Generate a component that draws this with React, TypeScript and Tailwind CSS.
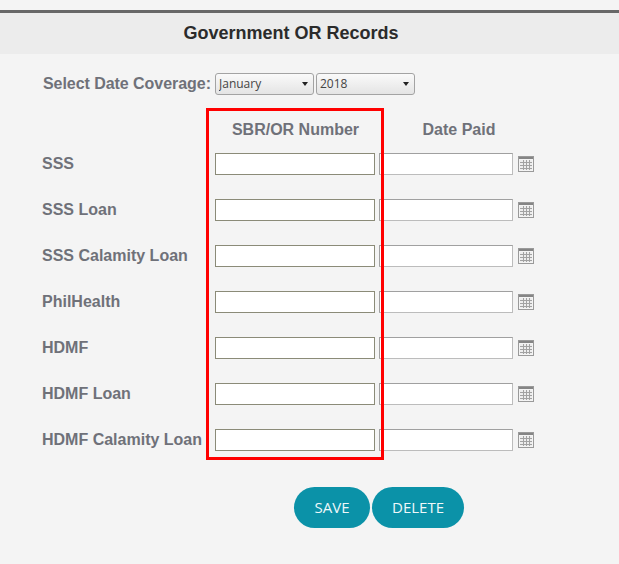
import { useState } from 'react';

const rows = ['SSS', 'SSS Loan', 'SSS Calamity Loan', 'PhilHealth', 'HDMF', 'HDMF Loan', 'HDMF Calamity Loan'];

function CalendarIcon() {
    return (
        <svg width="16" height="16" viewBox="0 0 16 16" className="ml-[5px] shrink-0">
            <rect x="0.5" y="0.5" width="15" height="15" fill="#f4f4f4" stroke="#9a9a9a" />
            <rect x="1" y="1" width="14" height="2" fill="#858585" />
            <rect x="2" y="4" width="12" height="10" fill="#ededed" />
            <path d="M5.5 4v10M8.5 4v10M11.5 4v10M2 6.5h12M2 9.5h12M2 12.5h12" stroke="#a2a2a2" strokeWidth="1" fill="none" />
        </svg>
    );
}

function Dropdown({ value, options, className }: { value: string; options: string[]; className: string }) {
    const [v, setV] = useState(value);
    return (
        <div className={`relative h-[22px] rounded-[3px] border border-[#a3a3a3] bg-gradient-to-b from-[#fafafa] to-[#e4e4e4] ${className}`}>
            <select
                value={v}
                onChange={(e) => setV(e.target.value)}
                className="block h-[19px] w-full appearance-none bg-transparent pl-[3px] font-['Open_Sans',sans-serif] text-[12px] leading-[19px] text-[#444] outline-none"
            >
                {options.map((o) => (
                    <option key={o}>{o}</option>
                ))}
            </select>
            <span className="pointer-events-none absolute right-[5px] top-[8px] h-0 w-0 border-x-[3.5px] border-t-[4px] border-x-transparent border-t-[#222]" />
        </div>
    );
}

export default function App() {
    return (
        <div className="h-[564px] w-[619px] overflow-hidden bg-[#f4f4f4] pt-[10px] font-['Liberation_Sans',sans-serif]">
            <div className="h-[3px] bg-[#686868]" />
            <div className="flex h-[41px] items-center justify-center bg-[#ececec] pr-[37px]">
                <h1 className="text-[18px] font-bold text-[#2b2b2b]">Government OR Records</h1>
            </div>

            <div className="relative pl-[43px]">
                {/* Date coverage */}
                <div className="flex items-center pt-[18px]">
                    <span className="w-[172px] text-[16px] font-bold tracking-[-0.05px] text-[#6f7179]">Select Date Coverage:</span>
                    <Dropdown value="January" options={['January', 'February', 'March']} className="w-[99px]" />
                    <Dropdown value="2018" options={['2018', '2019']} className="ml-[2px] w-[99px]" />
                </div>

                {/* Column headers */}
                <div className="flex pt-[24px] text-[16px] font-bold text-[#6f7179]">
                    <span className="ml-[172px] w-[160px] pl-[1px] text-center leading-[20px]">SBR/OR Number</span>
                    <span className="ml-[4px] w-[160px] text-center leading-[20px]">Date Paid</span>
                </div>

                {/* Rows */}
                <div className="flex flex-col gap-[24px] pt-[13px]">
                    {rows.map((row) => (
                        <div key={row} className="flex h-[22px] items-center">
                            <label className="-ml-[1px] w-[173px] whitespace-nowrap text-[16px] font-bold text-[#6f7179]">{row}</label>
                            <input type="text" className="h-[22px] w-[160px] border border-[#8b8b78] bg-white outline-none" />
                            <input type="text" className="ml-[4px] h-[22px] w-[134px] border border-[#a0a0a0] border-b-[#bcbcbc] border-r-[#bcbcbc] bg-white outline-none" />
                            <CalendarIcon />
                        </div>
                    ))}
                </div>

                {/* Actions */}
                <div className="flex pl-[251px] pt-[36px] font-['Open_Sans',sans-serif] text-[15px] text-[#eef8fa]">
                    <button className="h-[41px] w-[76px] rounded-[21px] bg-[#0b92a8]">SAVE</button>
                    <button className="ml-[2px] h-[41px] w-[92px] rounded-[21px] bg-[#0b92a8]">DELETE</button>
                </div>

                {/* Red annotation box */}
                <div className="pointer-events-none absolute left-[206px] top-[54px] h-[352px] w-[178px] border-[3px] border-[#ff0000]" />
            </div>
        </div>
    );
}
